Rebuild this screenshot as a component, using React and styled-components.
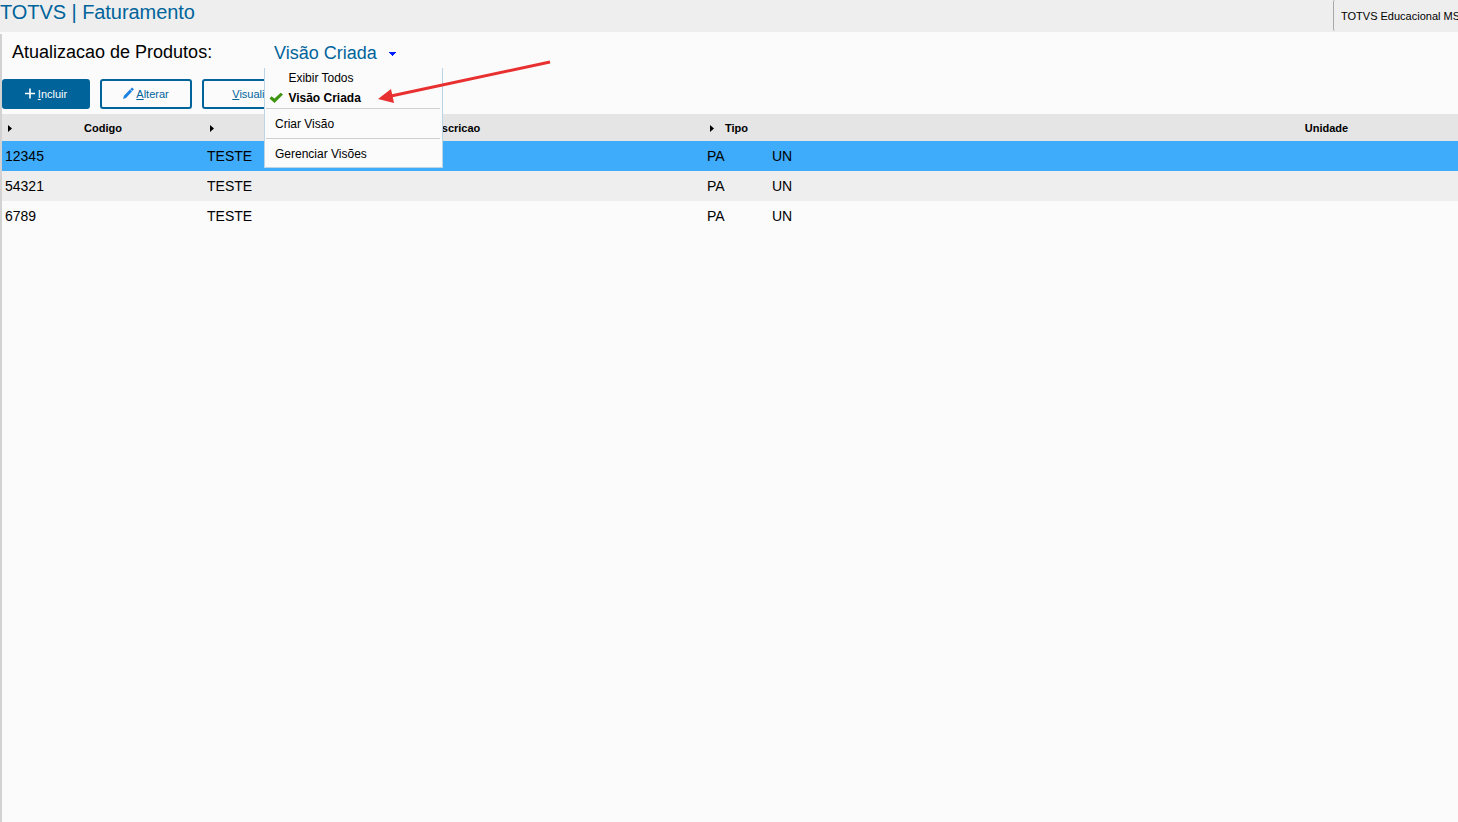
import React from 'react'
import styled, { createGlobalStyle } from 'styled-components'

const GlobalStyle = createGlobalStyle`
  * {
    box-sizing: border-box;
  }
  body {
    margin: 0;
    overflow: hidden;
    background: #fbfbfb;
    color: #000;
    font-family: "Liberation Sans", Arial, sans-serif;
  }
`

const Page = styled.div`
  display: flex;
  flex-direction: column;
  width: 100vw;
  height: 100vh;
  overflow: hidden;
`

const TopBar = styled.header`
  display: flex;
  justify-content: space-between;
  flex: none;
  height: 32px;
  background: #eeeeee;
`

const AppTitle = styled.div`
  color: #00649b;
  font-size: 20px;
  line-height: 24px;
  letter-spacing: -0.06px;
`

const Branch = styled.div`
  width: 125px;
  height: 31px;
  padding-left: 7px;
  border-left: 1px solid #a8a8a8;
  border-radius: 2px 0 0 2px;
  font-size: 11px;
  line-height: 32px;
  white-space: nowrap;
  overflow: hidden;
`

const Content = styled.main`
  flex: 1;
  margin-top: 2px;
  border-left: 2px solid #d2d2d2;
`

const Heading = styled.div`
  display: flex;
  height: 45px;
  padding-left: 10px;
  font-size: 18px;
  line-height: 36px;
`

const PageName = styled.div`
  width: 262px;
`

const ViewPicker = styled.div`
  position: relative;
  display: flex;
  align-items: center;
  height: 38px;
  gap: 12px;
  color: #00649b;
`

const Caret = styled.svg`
  margin-top: 2px;
`

const Menu = styled.div`
  position: absolute;
  z-index: 1;
  top: 34px;
  left: -10px;
  width: 179px;
  height: 100px;
  border: 1px solid #bcd5e6;
  border-top: 0;
  background: #fbfbfb;
  color: #000;
`

const MenuItem = styled.div`
  display: flex;
  align-items: center;
  height: ${(props) => (props.$tall ? 29 : 20)}px;
  padding-left: ${(props) => (props.$tall ? 10 : 4)}px;
  font-size: 12px;
  line-height: 20px;
  font-weight: ${(props) => (props.$active ? 700 : 400)};
`

const CheckSlot = styled.span`
  display: flex;
  width: 19.4px;
`

const Separator = styled.div`
  height: 1px;
  margin: 0 2px 0 1px;
  background: #cfcfcf;
`

const Toolbar = styled.div`
  display: flex;
  gap: 10px;
  height: 35px;
`

const Button = styled.button`
  display: flex;
  align-items: center;
  justify-content: center;
  gap: 2px;
  width: ${(props) => props.$width}px;
  height: 30px;
  padding: 0;
  border: 2px solid #00649b;
  border-radius: 3px;
  background: ${(props) => (props.$primary ? '#00649b' : '#fbfbfb')};
  color: ${(props) => (props.$primary ? '#fff' : '#00649b')};
  font-family: inherit;
  font-size: 11px;

  svg {
    margin-bottom: 2px;
  }
`

const Columns = styled.div`
  display: grid;
  grid-template-columns: 202px 500px 65px 1115px;
  overflow: hidden;
`

const HeaderRow = styled(Columns)`
  height: 27px;
  background: #e5e5e5;
  font-size: 11px;
  font-weight: 700;
  line-height: 28px;
  text-align: center;
`

const HeaderCell = styled.div`
  position: relative;
`

const SortMark = styled.svg`
  position: absolute;
  left: 6px;
  top: 11px;
`

const Row = styled(Columns)`
  height: 30px;
  background: ${(props) => props.$background};
  font-size: 14px;
  line-height: 30px;
`

const Cell = styled.div`
  padding-left: 3px;
`

const Arrow = styled.svg`
  position: absolute;
  z-index: 2;
  left: 103px;
  top: 24px;
`

const columns = ['Codigo', 'Descricao', 'Tipo', 'Unidade']

const products = [
  { code: '12345', background: '#3eacfa' },
  { code: '54321', background: '#eeeeee' },
  { code: '6789', background: '#fbfbfb' },
]

const ViewMenu = () => {
  return (
    <Menu>
      <MenuItem>
        <CheckSlot />
        Exibir Todos
      </MenuItem>
      <MenuItem $active>
        <CheckSlot>
          <svg width="15" height="12" viewBox="0 0 15 12">
            <path d="M0.5 6.5 L2.6 4.3 L5.4 6.6 L11.8 0.8 L14 2.6 L5.5 11 Z" fill="#3f9410" />
          </svg>
        </CheckSlot>
        Visão Criada
      </MenuItem>
      <Separator />
      <MenuItem $tall>Criar Visão</MenuItem>
      <Separator />
      <MenuItem $tall>Gerenciar Visões</MenuItem>
    </Menu>
  )
}

const App = () => {
  return (
    <Page>
      <GlobalStyle />
      <TopBar>
        <AppTitle>TOTVS | Faturamento</AppTitle>
        <Branch>TOTVS Educacional MS</Branch>
      </TopBar>
      <Content>
        <Heading>
          <PageName>Atualizacao de Produtos:</PageName>
          <ViewPicker>
            <span>Visão Criada</span>
            <Caret width="8" height="4" viewBox="0 0 8 4" shapeRendering="crispEdges">
              <path d="M0 0h7v1h-1v1h-1v1h-1v1h-1v-1h-1v-1h-1v-1h-1z" fill="#001eff" />
            </Caret>
            <ViewMenu />
            <Arrow width="176" height="48" viewBox="0 0 176 48">
              <path d="M14 38 L173 4" fill="none" stroke="#e93030" strokeWidth="3" />
              <path d="M1 41 L14 31 L17 45 Z" fill="#e93030" />
            </Arrow>
          </ViewPicker>
        </Heading>
        <Toolbar>
          <Button $primary $width={88}>
            <svg width="11" height="11" viewBox="0 0 11 11">
              <path d="M0 5.5h10M5 0.5v10" stroke="#fff" strokeWidth="1.6" />
            </svg>
            <span><u>I</u>ncluir</span>
          </Button>
          <Button $width={92}>
            <svg width="11" height="12" viewBox="0 0 11 12">
              <path d="M0 12 L1 8.8 L6.9 2.6 L9 4.5 L3 11 Z M7.2 2.2 L9 0.4 L11 2.3 L9.3 4.1 Z" fill="#1d83e2" />
            </svg>
            <span><u>A</u>lterar</span>
          </Button>
          <Button $width={108}>
            <span><u>V</u>isualizar</span>
          </Button>
        </Toolbar>
        <HeaderRow>
          {columns.map((name, index) => (
            <HeaderCell key={name}>
              {index < 3 && (
                <SortMark width="4" height="7" viewBox="0 0 4 7">
                  <path d="M0 0 L4 3.5 L0 7 Z" fill="#000" />
                </SortMark>
              )}
              {name}
            </HeaderCell>
          ))}
        </HeaderRow>
        {products.map((product) => (
          <Row key={product.code} $background={product.background}>
            <Cell>{product.code}</Cell>
            <Cell>TESTE</Cell>
            <Cell>PA</Cell>
            <Cell>UN</Cell>
          </Row>
        ))}
      </Content>
    </Page>
  )
}

export default App
